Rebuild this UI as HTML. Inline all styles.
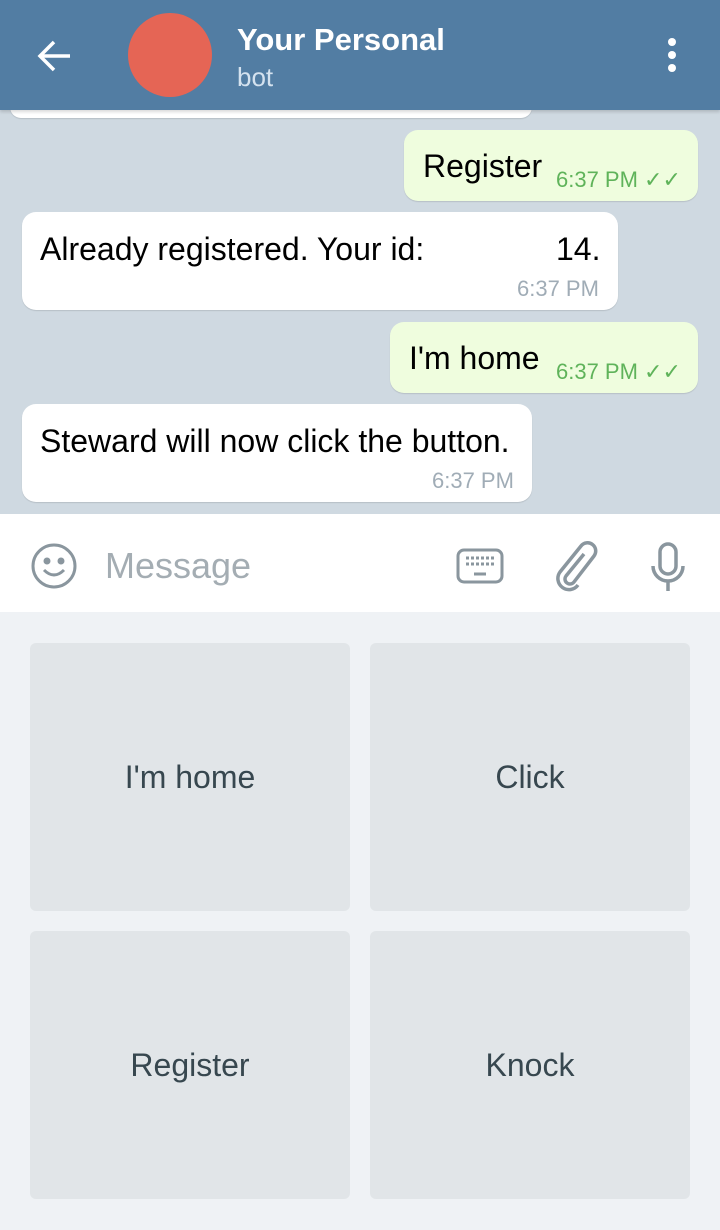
<!DOCTYPE html>
<html><head><meta charset="utf-8"><style>
*{margin:0;padding:0;box-sizing:border-box}
body{width:720px;height:1230px;overflow:hidden;font-family:"Liberation Sans",sans-serif;background:#cfd9e1;position:relative}
.hdr{position:absolute;left:0;top:0;width:720px;height:110px;background:#527da3;box-shadow:0 2px 3px rgba(0,0,0,.15);z-index:2}
.av{position:absolute;left:128px;top:13px;width:84px;height:84px;border-radius:50%;background:#e56555}
.t1{position:absolute;left:237px;top:22px;color:#fff;font-size:31px;font-weight:bold}
.t2{position:absolute;left:237px;top:62px;color:#d4e2ef;font-size:26px}
.b{position:absolute;background:#fff;border-radius:14px;box-shadow:0 1px 1px rgba(0,0,0,.12);font-size:32px;color:#000}
.o{background:#effdde}
.tm{position:absolute;font-size:22px;color:#a0acb6}
.o .tm{color:#5fb35a}
.input{position:absolute;left:0;top:514px;width:720px;height:98px;background:#fff}
.kb{position:absolute;left:0;top:612px;width:720px;height:618px;background:#eff2f5}
.k{position:absolute;width:320px;height:268px;background:#e1e5e8;border-radius:6px;font-size:32px;color:#37474f;display:flex;align-items:center;justify-content:center}
</style></head><body>
<div class="hdr">
<svg style="position:absolute;left:36px;top:38px" width="38" height="36" viewBox="0 0 38 36"><path d="M34 18H5M18 4L4 18l14 14" stroke="#fff" stroke-width="3.5" fill="none"/></svg>
<div class="av"></div>
<div class="t1">Your Personal</div><div class="t2">bot</div>
<svg style="position:absolute;left:664px;top:38px" width="16" height="36"><circle cx="8" cy="4" r="4" fill="#fff"/><circle cx="8" cy="17" r="4" fill="#fff"/><circle cx="8" cy="30" r="4" fill="#fff"/></svg>
</div>
<div class="b" style="left:10px;top:96px;width:522px;height:22px"></div>
<div class="b o" style="left:404px;top:130px;width:294px;height:71px"><span style="position:absolute;left:19px;top:18px">Register</span><span class="tm" style="left:152px;top:37px">6:37 PM ✓✓</span></div>
<div class="b" style="left:22px;top:212px;width:596px;height:98px"><span style="position:absolute;left:18px;top:19px">Already registered. Your id:</span><span style="position:absolute;left:534px;top:19px">14.</span><span class="tm" style="left:495px;top:64px">6:37 PM</span></div>
<div class="b o" style="left:390px;top:322px;width:308px;height:71px"><span style="position:absolute;left:19px;top:18px">I'm home</span><span class="tm" style="left:166px;top:37px">6:37 PM ✓✓</span></div>
<div class="b" style="left:22px;top:404px;width:510px;height:98px"><span style="position:absolute;left:18px;top:19px">Steward will now click the button.</span><span class="tm" style="left:410px;top:64px">6:37 PM</span></div>
<div class="input">
<svg style="position:absolute;left:30px;top:28px" width="48" height="48" viewBox="0 0 48 48" fill="none" stroke="#8a969e" stroke-width="3"><circle cx="24" cy="24" r="21"/><circle cx="17" cy="19" r="2" fill="#8a969e"/><circle cx="31" cy="19" r="2" fill="#8a969e"/><path d="M14 28q10 10 20 0"/></svg>
<div style="position:absolute;left:105px;top:31px;font-size:36px;color:#a4adb3">Message</div>
<svg style="position:absolute;left:456px;top:34px" width="48" height="36" fill="none" stroke="#8a969e" stroke-width="3"><rect x="2" y="2" width="44" height="32" rx="6"/><path d="M10 10h28M10 16h28" stroke-dasharray="3 2"/><path d="M18 26h12"/></svg>
<svg style="position:absolute;left:552px;top:26px" width="48" height="52" viewBox="0 0 48 52" fill="none" stroke="#8a969e" stroke-width="3.5"><path d="M32 14L14 36a5 5 0 0 0 8 6L42 16a8 8 0 0 0-13-10L8 32a11 11 0 0 0 18 13"/></svg>
<svg style="position:absolute;left:648px;top:28px" width="40" height="50" fill="none" stroke="#8a969e" stroke-width="3.5"><rect x="12" y="2" width="16" height="30" rx="8"/><path d="M5 24a15 15 0 0 0 30 0M20 39v10"/></svg>
</div>
<div class="kb">
<div class="k" style="left:30px;top:31px">I'm home</div>
<div class="k" style="left:370px;top:31px">Click</div>
<div class="k" style="left:30px;top:319px">Register</div>
<div class="k" style="left:370px;top:319px">Knock</div>
</div>
</body></html>
